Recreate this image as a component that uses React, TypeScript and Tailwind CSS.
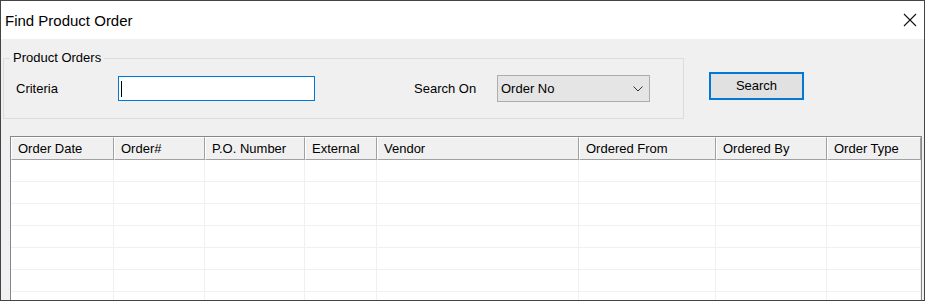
const columns = [
  { title: 'Order Date', width: 'w-[103px]' },
  { title: 'Order#', width: 'w-[91px]' },
  { title: 'P.O. Number', width: 'w-[100px]' },
  { title: 'External', width: 'w-[72px]' },
  { title: 'Vendor', width: 'w-[202px]' },
  { title: 'Ordered From', width: 'w-[137px]' },
  { title: 'Ordered By', width: 'w-[111px]' },
  { title: 'Order Type', width: 'w-[94px]' },
];

const emptyRows = [0, 1, 2, 3, 4, 5, 6];

export default function App() {
  return (
    <div className="w-[925px] h-[301px] border border-[#444] flex flex-col overflow-hidden font-['Liberation_Sans',Arial,sans-serif] text-black text-[13px]">
      {/* Title bar */}
      <div className="h-[38px] bg-white flex items-center justify-between pl-[4px] pr-[6px] shrink-0">
        <span className="text-[15px] leading-none">Find Product Order</span>
        <svg className="w-[14px] h-[14px] mr-[1px]" viewBox="0 0 14 14" fill="none" stroke="#111" strokeWidth="1.1">
          <path d="M1 1L13 13M13 1L1 13" />
        </svg>
      </div>

      {/* Body */}
      <div className="flex-1 bg-[#f0f0f0] pt-[11px] overflow-hidden">
        <div className="flex items-start">
          <fieldset className="ml-[2px] w-[681px] border border-[#dcdcdc] pl-[6px] pb-[16px]">
            <legend className="px-[3px] leading-[16px] text-[13px]">Product Orders</legend>
            <div className="flex items-center mt-[9px] h-[27px]">
              <span className="ml-[6px] w-[102px]">Criteria</span>
              <div className="w-[197px] h-[25px] bg-white border border-[#0078d7] flex items-center">
                <span className="ml-[2px] w-px h-[16px] bg-black" />
              </div>
              <span className="ml-[99px] w-[83px]">Search On</span>
              <div className="w-[153px] h-[27px] bg-[#e5e5e5] border border-[#adadad] flex items-center justify-between pl-[3px] pr-[6px]">
                <span>Order No</span>
                <svg className="w-[10px] h-[6px]" viewBox="0 0 10 6" fill="none" stroke="#333" strokeWidth="1">
                  <path d="M0.5 0.5L5 5L9.5 0.5" />
                </svg>
              </div>
            </div>
          </fieldset>
          <button className="ml-[25px] mt-[22px] w-[95px] h-[28px] border-2 border-[#0078d7] bg-[#e1e1e1] flex items-center justify-center">
            Search
          </button>
        </div>

        {/* Results grid */}
        <div className="ml-[9px] mt-[17px] w-[912px] border border-[#828790] bg-white">
          <div className="flex h-[23px] bg-[#f0f0f0]">
            {columns.map((col) => (
              <div
                key={col.title}
                className={`${col.width} shrink-0 flex items-center pl-[6px] border-t border-l border-t-white border-l-white border-r border-b border-r-[#a0a0a0] border-b-[#a0a0a0]`}
              >
                {col.title}
              </div>
            ))}
          </div>
          {emptyRows.map((r) => (
            <div key={r} className="flex h-[22px]">
              {columns.map((col) => (
                <div key={col.title} className={`${col.width} shrink-0 border-r border-b border-[#f0f0f0]`} />
              ))}
            </div>
          ))}
        </div>
      </div>
    </div>
  );
}
